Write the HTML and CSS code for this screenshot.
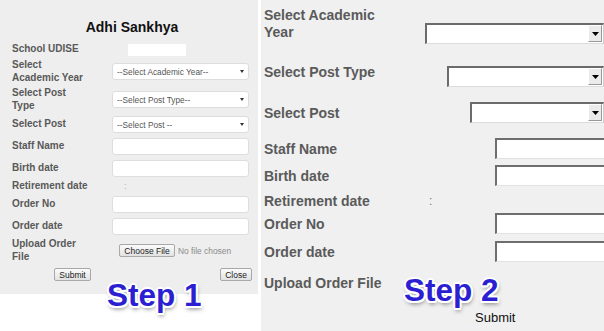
FILE: index.html
```html
<!DOCTYPE html>
<html lang="en">
<head>
<meta charset="utf-8">
<title>Adhi Sankhya</title>
<link rel="stylesheet" href="styles.css">
</head>
<body>
<div class="page">
  <section class="left">
    <form class="card">
      <h1 class="title">Adhi Sankhya</h1>
      <div class="row r-udise"><span class="lbl">School UDISE</span><span class="udise"></span></div>
      <div class="row r-ay"><span class="lbl">Select Academic Year</span>
        <div class="sel"><span>--Select Academic Year--</span><svg class="tri" viewBox="0 0 4 3" width="4" height="3"><path d="M0 0H4L2 3Z" fill="#333"/></svg></div></div>
      <div class="row r-pt"><span class="lbl">Select Post Type</span>
        <div class="sel"><span>--Select Post Type--</span><svg class="tri" viewBox="0 0 4 3" width="4" height="3"><path d="M0 0H4L2 3Z" fill="#333"/></svg></div></div>
      <div class="row r-p"><span class="lbl">Select Post</span>
        <div class="sel"><span>--Select Post --</span><svg class="tri" viewBox="0 0 4 3" width="4" height="3"><path d="M0 0H4L2 3Z" fill="#333"/></svg></div></div>
      <div class="row r-staff"><span class="lbl">Staff Name</span><input class="inp" type="text"></div>
      <div class="row r-birth"><span class="lbl">Birth date</span><input class="inp" type="text"></div>
      <div class="row r-ret"><span class="lbl">Retirement date</span><span class="colon">:</span></div>
      <div class="row r-ono"><span class="lbl">Order No</span><input class="inp" type="text"></div>
      <div class="row r-odate"><span class="lbl">Order date</span><input class="inp" type="text"></div>
      <div class="row r-upload"><span class="lbl">Upload Order File</span>
        <span class="btn choose">Choose File</span><span class="nofile">No file chosen</span></div>
      <div class="row r-btns"><span class="btn submit">Submit</span><span class="btn close">Close</span></div>
    </form>
  </section>
  <section class="right">
    <div class="rrow rr-ay"><span class="rlbl">Select Academic Year</span>
      <div class="wsel w-ay"><span class="warr"><svg viewBox="0 0 7 4" width="7" height="4"><path d="M0 0H7L3.5 4Z" fill="#000"/></svg></span></div></div>
    <div class="rrow rr-pt"><span class="rlbl">Select Post Type</span>
      <div class="wsel w-pt"><span class="warr"><svg viewBox="0 0 7 4" width="7" height="4"><path d="M0 0H7L3.5 4Z" fill="#000"/></svg></span></div></div>
    <div class="rrow rr-p"><span class="rlbl">Select Post</span>
      <div class="wsel w-p"><span class="warr"><svg viewBox="0 0 7 4" width="7" height="4"><path d="M0 0H7L3.5 4Z" fill="#000"/></svg></span></div></div>
    <div class="rrow rr-staff"><span class="rlbl">Staff Name</span><input class="winp" type="text"></div>
    <div class="rrow rr-birth"><span class="rlbl">Birth date</span><input class="winp" type="text"></div>
    <div class="rrow rr-ret"><span class="rlbl">Retirement date</span><span class="rcolon">:</span></div>
    <div class="rrow rr-ono"><span class="rlbl">Order No</span><input class="winp" type="text"></div>
    <div class="rrow rr-odate"><span class="rlbl">Order date</span><input class="winp" type="text"></div>
    <div class="rrow rr-upload"><span class="rlbl">Upload Order File</span></div>
    <div class="rrow rr-submit"><span class="rsubmit">Submit</span></div>
  </section>
  <div class="step step1">Step 1</div>
  <div class="step step2">Step 2</div>
</div>
</body>
</html>
```

FILE: styles.css
```css
html, body {
  margin: 0;
  padding: 0;
}
body {
  width: 604px;
  height: 331px;
  overflow: hidden;
  background: #ffffff;
  font-family: "Liberation Sans", Arial, sans-serif;
}
.page {
  position: relative;
  display: flex;
  height: 331px;
}

/* ---------- left panel (Step 1) ---------- */
.left {
  width: 258px;
  flex: none;
}
.card {
  margin: 0;
  background: #eeeeee;
  height: 294px;
  box-sizing: border-box;
  padding: 17px 6px 0 12px;
  display: flex;
  flex-direction: column;
}
.title {
  margin: 0;
  height: 20px;
  font-size: 14px;
  line-height: 20px;
  font-weight: bold;
  text-align: center;
  color: #111111;
}
.row {
  display: flex;
  align-items: center;
  flex: none;
  height: 17px;
}
.lbl {
  width: 78px;
  margin-right: 22px;
  flex: none;
  font-size: 10px;
  line-height: 12.5px;
  font-weight: bold;
  color: #595959;
}
.r-udise { height: 13px; margin-top: 6px; }
.r-ay { margin-top: 7px; }
.r-pt { margin-top: 11px; }
.r-p { margin-top: 8px; }
.r-staff { margin-top: 5px; }
.r-birth { margin-top: 5px; }
.r-ret { height: 12px; margin-top: 3px; }
.r-ono { margin-top: 4px; }
.r-odate { margin-top: 5px; }
.r-upload { height: 13px; margin-top: 9px; }
.r-btns { height: 13px; margin-top: 11px; }

.udise {
  width: 58px;
  height: 12px;
  margin-left: 16px;
  background: #ffffff;
}
.sel {
  width: 137px;
  height: 17px;
  box-sizing: border-box;
  background: #ffffff;
  border: 1px solid #dddddd;
  border-radius: 3px;
  display: flex;
  align-items: center;
  justify-content: space-between;
  padding: 0 4px 0 4px;
  font-size: 8.3px;
  color: #555555;
}
.tri {
  display: block;
}
.inp {
  width: 137px;
  height: 17px;
  box-sizing: border-box;
  margin: 0;
  padding: 0;
  background: #ffffff;
  border: 1px solid #dedede;
  border-radius: 3px;
  outline: none;
}
.colon {
  margin-left: 12px;
  font-size: 9px;
  color: #b0b0b0;
}
.btn {
  display: inline-flex;
  align-items: center;
  justify-content: center;
  box-sizing: border-box;
  height: 13px;
  border: 1px solid #a8a8a8;
  border-radius: 2px;
  background: linear-gradient(#fbfbfb, #e2e2e2);
  font-size: 8.5px;
  color: #222222;
  flex: none;
}
.choose {
  width: 56px;
  height: 13px;
  margin-left: 7px;
}
.nofile {
  margin-left: 3px;
  font-size: 8.4px;
  color: #8a8a8a;
}
.submit {
  width: 37px;
  margin-left: 42px;
}
.close {
  width: 32px;
  margin-left: auto;
}

/* ---------- right panel (Step 2) ---------- */
.right {
  flex: 1;
  margin-left: 3px;
  height: 331px;
  background: #f0f0f0;
  box-sizing: border-box;
  padding-left: 3px;
  overflow: hidden;
  display: flex;
  flex-direction: column;
}
.rrow {
  display: flex;
  align-items: center;
  flex: none;
  height: 21px;
}
.rlbl {
  width: 140px;
  flex: none;
  font-size: 14px;
  line-height: 17px;
  font-weight: bold;
  color: #5a5a5a;
}
.rr-ay { height: 37px; margin-top: 7px; align-items: flex-start; }
.rr-ay .wsel { align-self: flex-end; }
.rr-pt { height: 23px; margin-top: 20px; align-items: flex-start; }
.rr-pt .wsel { align-self: flex-end; }
.rr-p { margin-top: 15px; }
.rr-p .rlbl { padding-top: 2px; }
.rr-staff { margin-top: 15px; }
.rr-staff .rlbl, .rr-birth .rlbl, .rr-ono .rlbl, .rr-odate .rlbl { padding-top: 2px; }
.rr-birth { margin-top: 6px; }
.rr-ret { height: 16px; margin-top: 7px; }
.rr-ono { margin-top: 4px; }
.rr-odate { margin-top: 7px; }
.rr-upload { height: 17px; margin-top: 13px; }
.rr-submit { height: 15px; margin-top: 18px; }

.wsel {
  height: 21px;
  flex: none;
  box-sizing: border-box;
  background: #ffffff;
  border-top: 2px solid #6b6b6b;
  border-left: 2px solid #6b6b6b;
  border-bottom: 1px solid #dcdcdc;
  border-right: 1px solid #cfcfcf;
  padding: 0 1px 1px 0;
  display: flex;
  justify-content: flex-end;
}
.w-ay { width: 179px; margin-left: 21px; }
.w-pt { width: 157px; margin-left: 43px; }
.w-p { width: 134px; margin-left: 66px; }
.warr {
  width: 14px;
  box-sizing: border-box;
  background: #ebebeb;
  border-top: 1px solid #ffffff;
  border-left: 1px solid #ffffff;
  border-right: 1px solid #999999;
  border-bottom: 1px solid #999999;
  display: flex;
  align-items: center;
  justify-content: center;
}
.warr svg { display: block; }
.winp {
  width: 130px;
  height: 21px;
  flex: none;
  box-sizing: border-box;
  margin: 0 0 0 91px;
  padding: 0;
  background: #ffffff;
  border-top: 2px solid #6e6e6e;
  border-left: 2px solid #6e6e6e;
  border-bottom: 1px solid #e2e2e2;
  border-right: 1px solid #e2e2e2;
  outline: none;
}
.rcolon {
  margin-left: 25px;
  font-size: 12px;
  color: #777777;
}
.rsubmit {
  margin-left: 211px;
  font-size: 13px;
  color: #111111;
}

/* ---------- step captions (overlaid on the screenshots) ---------- */
.step {
  position: absolute;
  font-size: 31.5px;
  line-height: 30px;
  font-weight: bold;
  color: #2c1fd2;
  white-space: nowrap;
  text-shadow:
    -2px 0 0 #fff, 2px 0 0 #fff, 0 -2px 0 #fff, 0 2px 0 #fff,
    -1.5px -1.5px 0 #fff, 1.5px -1.5px 0 #fff, -1.5px 1.5px 0 #fff, 1.5px 1.5px 0 #fff,
    1px 3px 4px rgba(0, 0, 0, 0.5);
}
.step1 { left: 107px; top: 280px; }
.step2 { left: 404px; top: 275px; }
```
